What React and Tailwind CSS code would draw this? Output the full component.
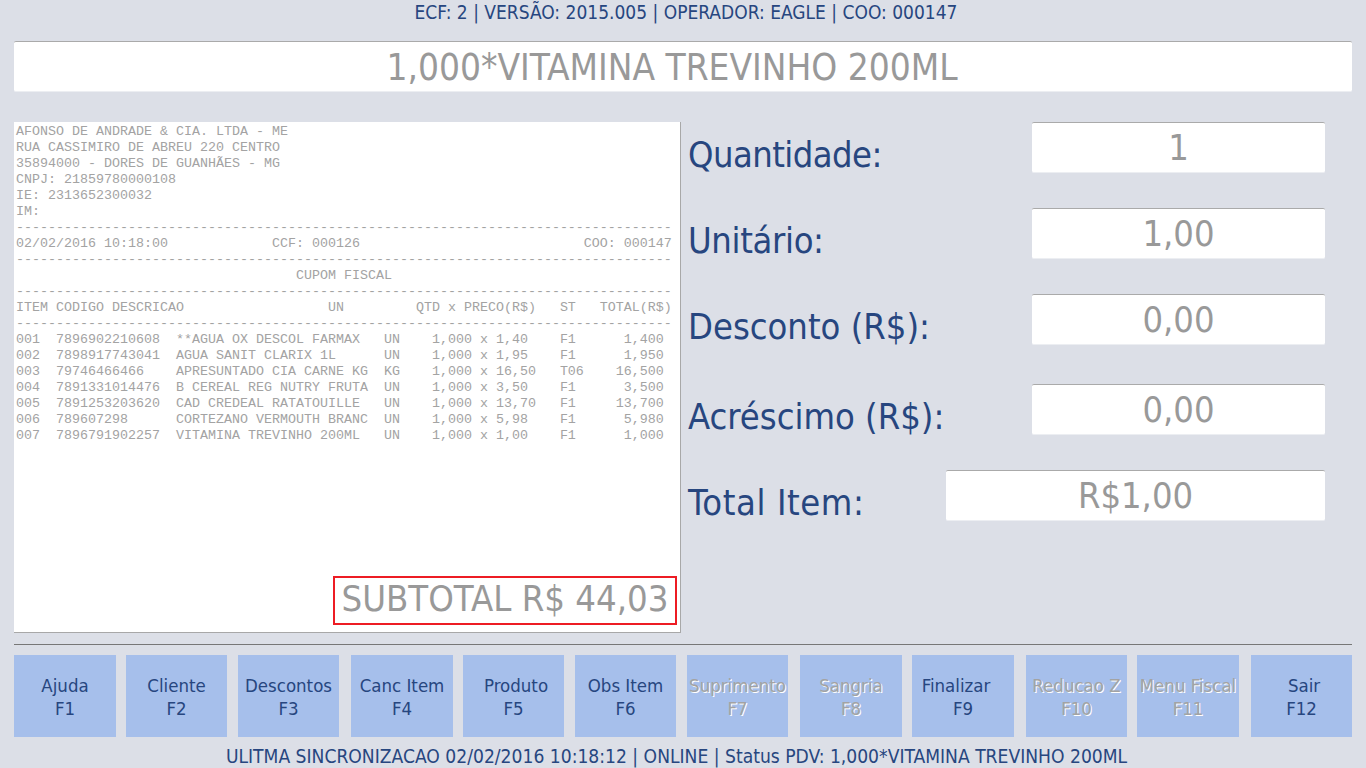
const tahoma = "font-['DejaVu_Sans_Condensed','DejaVu_Sans',sans-serif] font-stretch-condensed";

const receipt = `AFONSO DE ANDRADE & CIA. LTDA - ME
RUA CASSIMIRO DE ABREU 220 CENTRO
35894000 - DORES DE GUANHÃES - MG
CNPJ: 21859780000108
IE: 2313652300032
IM:
----------------------------------------------------------------------------------
02/02/2016 10:18:00             CCF: 000126                            COO: 000147
----------------------------------------------------------------------------------
                                   CUPOM FISCAL
----------------------------------------------------------------------------------
ITEM CODIGO DESCRICAO                  UN         QTD x PRECO(R$)   ST   TOTAL(R$)
----------------------------------------------------------------------------------
001  7896902210608  **AGUA OX DESCOL FARMAX   UN    1,000 x 1,40    F1      1,400
002  7898917743041  AGUA SANIT CLARIX 1L      UN    1,000 x 1,95    F1      1,950
003  79746466466    APRESUNTADO CIA CARNE KG  KG    1,000 x 16,50   T06    16,500
004  7891331014476  B CEREAL REG NUTRY FRUTA  UN    1,000 x 3,50    F1      3,500
005  7891253203620  CAD CREDEAL RATATOUILLE   UN    1,000 x 13,70   F1     13,700
006  789607298      CORTEZANO VERMOUTH BRANC  UN    1,000 x 5,98    F1      5,980
007  7896791902257  VITAMINA TREVINHO 200ML   UN    1,000 x 1,00    F1      1,000`;

const fields = [
  { label: 'Quantidade:', value: '1', box: 'w-[293px]', row: 'mt-0', text: 'tracking-[-0.55px]' },
  { label: 'Unitário:', value: '1,00', box: 'w-[293px]', row: 'mt-[35px]', text: 'tracking-[-0.35px]' },
  { label: 'Desconto (R$):', value: '0,00', box: 'w-[293px]', row: 'mt-[35px]', text: '' },
  { label: 'Acréscimo (R$):', value: '0,00', box: 'w-[293px]', row: 'mt-[39px]', text: '' },
  { label: 'Total Item:', value: 'R$1,00', box: 'w-[379px]', row: 'mt-[35px]', text: 'tracking-[0.6px]' },
];

const buttons = [
  { name: 'Ajuda', key: 'F1', cls: 'w-[102px]' },
  { name: 'Cliente', key: 'F2', cls: 'w-[101px] ml-[10px]' },
  { name: 'Descontos', key: 'F3', cls: 'w-[101px] ml-[11px]' },
  { name: 'Canc Item', key: 'F4', cls: 'w-[102px] ml-[12px]' },
  { name: 'Produto', key: 'F5', cls: 'w-[101px] ml-[10px]', nameCls: 'pl-[5px]' },
  { name: 'Obs Item', key: 'F6', cls: 'w-[101px] ml-[11px]' },
  { name: 'Suprimento', key: 'F7', cls: 'w-[101px] ml-[11px]', disabled: true },
  { name: 'Sangria', key: 'F8', cls: 'w-[102px] ml-[12px]', disabled: true },
  { name: 'Finalizar', key: 'F9', cls: 'w-[102px] ml-[10px]', nameCls: 'pr-[14px]' },
  { name: 'Reducao Z', key: 'F10', cls: 'w-[101px] ml-[12px]', disabled: true },
  { name: 'Menu Fiscal', key: 'F11', cls: 'w-[102px] ml-[10px]', disabled: true },
  { name: 'Sair', key: 'F12', cls: 'w-[101px] ml-[12px]', nameCls: 'pl-[5px]' },
];

function ValueBox({ value, className }) {
  return (
    <div className={`h-[51px] pt-[1px] bg-white rounded-[2px] border-t border-t-[#aaaaaa] border-b border-b-[#eceef2] flex items-center justify-center text-[#999999] text-[36px] leading-none ${className}`}>
      {value}
    </div>
  );
}

export default function App() {
  return (
    <div className={`h-screen w-full overflow-hidden bg-[#dcdfe7] px-[14px] text-[#27467f] ${tahoma}`}>
      <div className="h-[41px] pb-[16px] pl-[6px] flex items-center justify-center text-[19px]">
        ECF: 2 | VERSÃO: 2015.005 | OPERADOR: EAGLE | COO: 000147
      </div>
      <ValueBox value="1,000*VITAMINA TREVINHO 200ML" className="w-full !pt-[3px] pr-[22px] !text-[36.7px]" />

      <div className="mt-[30px] h-[511px] flex">
        <div className="w-[667px] bg-white border-r border-b border-[#a8a8a8] pl-[2px] pt-[2px] flex flex-col">
          <pre className="font-['Liberation_Mono',monospace] text-[13.33px] leading-[16px] text-[#a3a3a3]">{receipt}</pre>
          <div className="mt-auto mb-[7px] mr-[3px] self-end w-[344px] h-[49px] pb-[2px] border-2 border-[#ed1c24] flex items-center justify-center text-[#999999] text-[36.2px] leading-none">
            SUBTOTAL R$ 44,03
          </div>
        </div>
        <div className="flex-1 pl-[7px] pr-[27px]">
          {fields.map((f) => (
            <div key={f.label} className={`flex justify-between h-[51px] ${f.row}`}>
              <div className={`text-[36px] leading-none pt-[15px] whitespace-nowrap ${f.text}`}>{f.label}</div>
              <ValueBox value={f.value} className={f.box} />
            </div>
          ))}
        </div>
      </div>

      <div className="mt-[11px] h-px bg-[#777777]" />

      <div className="mt-[10px] h-[82px] flex">
        {buttons.map((b) => (
          <div
            key={b.key}
            className={`bg-[#a6bfeb] pt-[2px] flex flex-col items-center justify-center text-[18.5px] leading-[23px] ${b.cls} ${b.disabled ? 'text-[#a3a3a3] [text-shadow:1px_1px_0_#ffffff]' : ''}`}
          >
            <span className={`whitespace-nowrap ${b.nameCls || ''}`}>{b.name}</span>
            <span>{b.key}</span>
          </div>
        ))}
      </div>

      <div className="h-[31px] pt-[9px] pr-[13px] flex items-center justify-center text-[19.1px] whitespace-nowrap">
        ULITMA SINCRONIZACAO 02/02/2016 10:18:12 | ONLINE | Status PDV: 1,000*VITAMINA TREVINHO 200ML
      </div>
    </div>
  );
}
